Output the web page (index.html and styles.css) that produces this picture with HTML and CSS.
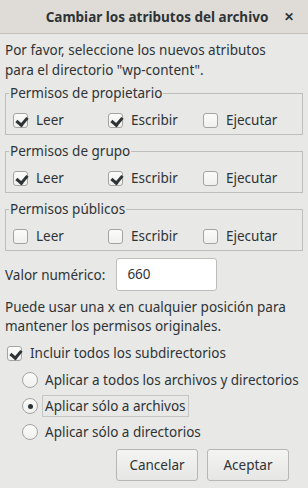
FILE: index.html
```html
<!DOCTYPE html>
<html lang="es">
<head>
    <meta charset="UTF-8">
    <title>Cambiar los atributos del archivo</title>
    <link rel="stylesheet" href="styles.css">
</head>
<body>
    <div class="ventana">
        <div class="titulo">
            <span class="titulo-texto">Cambiar los atributos del archivo</span>
            <span class="cerrar">&#x2715;</span>
        </div>

        <div class="cuerpo">
            <p class="aviso">Por favor, seleccione los nuevos atributos<br>para el directorio "wp-content".</p>

            <div class="marco">
                <span class="marco-titulo">Permisos de propietario</span>
                <div class="fila">
                    <label class="opcion"><span class="caja marcada"></span>Leer</label>
                    <label class="opcion"><span class="caja marcada"></span>Escribir</label>
                    <label class="opcion"><span class="caja"></span>Ejecutar</label>
                </div>
            </div>

            <div class="marco">
                <span class="marco-titulo">Permisos de grupo</span>
                <div class="fila">
                    <label class="opcion"><span class="caja marcada"></span>Leer</label>
                    <label class="opcion"><span class="caja marcada"></span>Escribir</label>
                    <label class="opcion"><span class="caja"></span>Ejecutar</label>
                </div>
            </div>

            <div class="marco">
                <span class="marco-titulo">Permisos públicos</span>
                <div class="fila">
                    <label class="opcion"><span class="caja"></span>Leer</label>
                    <label class="opcion"><span class="caja"></span>Escribir</label>
                    <label class="opcion"><span class="caja"></span>Ejecutar</label>
                </div>
            </div>

            <div class="valor">
                <span>Valor numérico:</span>
                <div class="entrada">660</div>
            </div>

            <p class="nota">Puede usar una x en cualquier posición para<br>mantener los permisos originales.</p>

            <label class="opcion sub"><span class="caja marcada"></span>Incluir todos los subdirectorios</label>

            <div class="radios">
                <label class="radio"><span class="punto"></span>Aplicar a todos los archivos y directorios</label>
                <label class="radio"><span class="punto elegido"></span><span class="foco">Aplicar sólo a archivos</span></label>
                <label class="radio"><span class="punto"></span>Aplicar sólo a directorios</label>
            </div>

            <div class="botones">
                <button class="boton">Cancelar</button>
                <button class="boton">Aceptar</button>
            </div>
        </div>
    </div>
</body>
</html>
```

FILE: styles.css
```css
* {
    box-sizing: border-box;
}

body {
    margin: 0;
    width: 308px;
    height: 488px;
    background: #e8e8e7;
    font-family: "Noto Sans", sans-serif;
    font-size: 13.5px;
    color: #2e3436;
    overflow: hidden;
}

.titulo {
    height: 34px;
    background: #dfdcd8;
    border-bottom: 1px solid #c3bfba;
    display: flex;
    align-items: center;
    justify-content: center;
    position: relative;
}

.titulo-texto {
    font-weight: bold;
    font-size: 13.5px;
    padding-left: 6px;
    white-space: nowrap;
}

.cerrar {
    position: absolute;
    right: 14px;
    top: 8px;
    font-size: 12px;
    font-weight: bold;
}

.cuerpo {
    padding: 6px 0 0 5px;
}

.aviso, .nota {
    margin: 0;
    line-height: 20px;
    white-space: nowrap;
}

/* marcos con titulo sobre el borde */
.marco {
    margin-top: 13px;
    padding: 0 0 0 7px;
    border: 1px solid #bebebe;
    height: 42px;
    width: 298px;
}

.marco + .marco {
    margin-top: 16px;
}

.marco-titulo {
    display: block;
    width: fit-content;
    margin: -10px 0 0 -4px;
    padding: 0 1px;
    line-height: 18px;
    background: #e8e8e7;
}

.fila {
    display: grid;
    grid-template-columns: 95px 95px 95px;
    margin-top: 8px;
}

.opcion, .radio {
    display: flex;
    align-items: center;
    white-space: nowrap;
}

.opcion {
    height: 20px;
}

.radio {
    height: 26px;
}

.caja {
    flex: none;
    width: 15px;
    height: 15px;
    border: 1px solid #a4a4a2;
    border-radius: 3px;
    background: linear-gradient(#fbfbfa, #f0f0ee);
    margin-right: 8px;
    position: relative;
}

.caja.marcada::after {
    content: "";
    position: absolute;
    left: 4px;
    top: 1px;
    width: 5px;
    height: 8px;
    border: solid #2e3436;
    border-width: 0 3px 3px 0;
    transform: rotate(40deg);
}

.valor {
    display: flex;
    align-items: center;
    margin-top: 7px;
}

.entrada {
    margin-left: 11px;
    width: 101px;
    height: 33px;
    line-height: 31px;
    background: #fff;
    border: 1px solid #bdbdbb;
    border-radius: 3px;
    padding-left: 10px;
}

.nota {
    margin-top: 7px;
    line-height: 19px;
}

.sub {
    margin: 7px 0 0 2px;
}

.radios {
    padding-left: 17px;
    margin-top: 4px;
    display: flex;
    flex-direction: column;
}

.punto {
    flex: none;
    width: 16px;
    height: 16px;
    border: 1px solid #a4a4a2;
    border-radius: 50%;
    background: linear-gradient(#fbfbfa, #f0f0ee);
    margin-right: 7px;
    position: relative;
}

.punto.elegido::after {
    content: "";
    position: absolute;
    left: 4.5px;
    top: 4.5px;
    width: 5px;
    height: 5px;
    border-radius: 50%;
    background: #2e3436;
}

.foco {
    border: 1px solid #c6c6c4;
    padding: 1px 2px;
    margin-left: -3px;
}

.botones {
    display: flex;
    justify-content: flex-end;
    gap: 9px;
    margin-top: 4px;
    padding-right: 19px;
}

.boton {
    width: 82px;
    height: 32px;
    font-family: inherit;
    font-size: 13.5px;
    color: #2e3436;
    background: linear-gradient(#f4f4f2, #e6e6e4);
    border: 1px solid #b6b6b4;
    border-radius: 3px;
}
```
